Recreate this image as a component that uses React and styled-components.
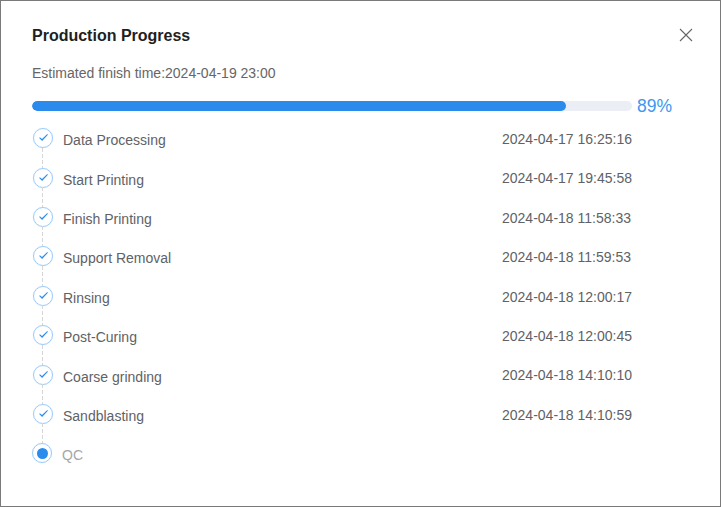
import React from 'react';
import styled, { createGlobalStyle } from 'styled-components';

const GlobalStyle = createGlobalStyle`
  html, body {
    margin: 0;
    padding: 0;
    background: #fff;
  }
  * {
    box-sizing: border-box;
  }
`;

const Dialog = styled.div`
  width: 721px;
  height: 507px;
  border: 1px solid #7a7a7a;
  background: #fff;
  padding: 26px 31px 0;
  font-family: 'Liberation Sans', Arial, sans-serif;
  overflow: hidden;
`;

const Header = styled.div`
  display: flex;
  align-items: center;
  justify-content: space-between;
  height: 18px;
`;

const Title = styled.div`
  font-size: 16px;
  font-weight: 700;
  color: #1f1f1f;
`;

const Close = styled.div`
  display: flex;
  margin-right: -4px;
  margin-top: -2px;
  color: #666;
`;

const Estimate = styled.div`
  margin-top: 19px;
  font-size: 14px;
  line-height: 18px;
  color: #666;
`;

const ProgressRow = styled.div`
  display: flex;
  align-items: center;
  margin-top: 14px;
  height: 20px;
`;

const Track = styled.div`
  width: 600px;
  height: 10px;
  border-radius: 5px;
  background: #ebeef5;
  overflow: hidden;
`;

const Fill = styled.div`
  height: 100%;
  border-radius: 5px;
  background: #2b8bec;
`;

const Percent = styled.div`
  margin-left: 5px;
  font-size: 17.5px;
  color: #3d97f0;
`;

const Steps = styled.div`
  display: flex;
  flex-direction: column;
  margin-top: 2.6px;
  width: 600px;
`;

const Step = styled.div`
  display: flex;
  align-items: center;
  height: 39.4px;
  position: relative;

  &:not(:last-child)::after {
    content: '';
    position: absolute;
    left: 10px;
    top: 29px;
    width: 1px;
    height: 20px;
    background: repeating-linear-gradient(to bottom, #d6d6d6 0 4px, transparent 4px 6px);
  }
`;

const Dot = styled.div`
  width: 20px;
  height: 20px;
  margin-left: ${({ $pending }) => ($pending ? '0' : '1px')};
  border-radius: 50%;
  border: 1px solid #9ccbfb;
  box-shadow: 0 0 1px #c4dffc;
  display: flex;
  align-items: center;
  justify-content: center;
  flex-shrink: 0;
`;

const Inner = styled.div`
  width: 11px;
  height: 11px;
  border-radius: 50%;
  background: #2b8bec;
`;

const Label = styled.div`
  margin-left: 10px;
  margin-top: ${({ $pending }) => ($pending ? '2.8px' : '3.8px')};
  font-size: 14px;
  color: ${({ $pending }) => ($pending ? '#a6a6a6' : '#606266')};
`;

const Time = styled.div`
  margin-left: auto;
  margin-top: 1.4px;
  width: 130px;
  font-size: 14px;
  white-space: nowrap;
  color: #606266;
`;

const steps = [
  ['Data Processing', '2024-04-17 16:25:16'],
  ['Start Printing', '2024-04-17 19:45:58'],
  ['Finish Printing', '2024-04-18 11:58:33'],
  ['Support Removal', '2024-04-18 11:59:53'],
  ['Rinsing', '2024-04-18 12:00:17'],
  ['Post-Curing', '2024-04-18 12:00:45'],
  ['Coarse grinding', '2024-04-18 14:10:10'],
  ['Sandblasting', '2024-04-18 14:10:59'],
];

const Check = () => (
  <svg width="10" height="10" viewBox="0 0 10 10">
    <path d="M1.2 5 L1.9 4.3 L4 6 L9.3 1.1 L9.9 1.7 L4.1 8 Z" fill="#2b8bec" />
  </svg>
);

const App = () => (
  <Dialog>
    <GlobalStyle />
    <Header>
      <Title>Production Progress</Title>
      <Close>
        <svg width="14" height="14" viewBox="0 0 14 14" fill="none">
          <path d="M1 1 L13 13 M13 1 L1 13" stroke="currentColor" strokeWidth="1.1" />
        </svg>
      </Close>
    </Header>
    <Estimate>Estimated finish time:2024-04-19 23:00</Estimate>
    <ProgressRow>
      <Track>
        <Fill style={{ width: '89%' }} />
      </Track>
      <Percent>89%</Percent>
    </ProgressRow>
    <Steps>
      {steps.map(([name, time]) => (
        <Step key={name}>
          <Dot>
            <Check />
          </Dot>
          <Label>{name}</Label>
          <Time>{time}</Time>
        </Step>
      ))}
      <Step>
        <Dot $pending>
          <Inner />
        </Dot>
        <Label $pending>QC</Label>
      </Step>
    </Steps>
  </Dialog>
);

export default App;
